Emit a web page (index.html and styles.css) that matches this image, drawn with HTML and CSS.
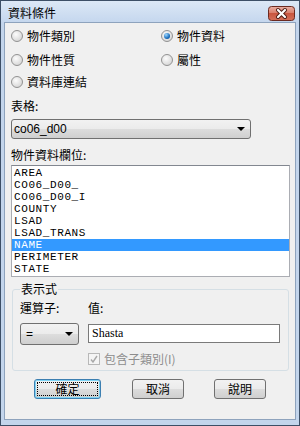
FILE: index.html
```html
<!DOCTYPE html>
<html lang="zh-Hant">
<head>
    <meta charset="UTF-8">
    <meta name="viewport" content="width=device-width, initial-scale=1.0">
    <title>資料條件</title>
    <link rel="stylesheet" href="styles.css">
</head>
<body>
    <div class="window">
        <div class="titlebar">
            <span class="title">資料條件</span>
            <div class="close-btn">
                <svg width="27" height="15" viewBox="0 0 27 15">
                    <defs>
                        <linearGradient id="red" x1="0" y1="0" x2="0" y2="1">
                            <stop offset="0" stop-color="#eab1a5"/>
                            <stop offset="0.5" stop-color="#d87a66"/>
                            <stop offset="0.5" stop-color="#c9563f"/>
                            <stop offset="1" stop-color="#d4705a"/>
                        </linearGradient>
                    </defs>
                    <rect x="0.5" y="0.5" width="26" height="14" rx="3" fill="url(#red)" stroke="#6b2a20"/>
                    <path d="M10 4 L17 11 M17 4 L10 11" stroke="#4a1a12" stroke-width="4" stroke-linecap="round"/>
                    <path d="M10 4 L17 11 M17 4 L10 11" stroke="#fff" stroke-width="2.2" stroke-linecap="round"/>
                </svg>
            </div>
        </div>
        <div class="client">
            <div class="radios">
                <div class="radio-item"><span class="radio"></span>物件類別</div>
                <div class="radio-item"><span class="radio checked"></span>物件資料</div>
                <div class="radio-item"><span class="radio"></span>物件性質</div>
                <div class="radio-item"><span class="radio"></span>屬性</div>
                <div class="radio-item"><span class="radio"></span>資料庫連結</div>
            </div>

            <p class="label first">表格:</p>
            <div class="combo wide">
                <span>co06_d00</span>
                <span class="arrow"></span>
            </div>

            <p class="label second">物件資料欄位:</p>
            <ul class="listbox">
                <li>AREA</li>
                <li>CO06_D00_</li>
                <li>CO06_D00_I</li>
                <li>COUNTY</li>
                <li>LSAD</li>
                <li>LSAD_TRANS</li>
                <li class="selected">NAME</li>
                <li>PERIMETER</li>
                <li>STATE</li>
            </ul>

            <fieldset class="group">
                <legend>表示式</legend>
                <div class="expr">
                    <span>運算子:</span>
                    <span>值:</span>
                    <div class="combo small">
                        <span>=</span>
                        <span class="arrow"></span>
                    </div>
                    <div class="textbox">Shasta</div>
                    <div class="check-row">
                        <span class="checkbox">
                            <svg width="8" height="8" viewBox="0 0 8 8">
                                <path d="M1 4.5 L3 7 L7 1" fill="none" stroke="#a8a8a8" stroke-width="1.4"/>
                            </svg>
                        </span>
                        包含子類別(I)
                    </div>
                </div>
            </fieldset>

            <div class="buttons">
                <div class="btn default">確定</div>
                <div class="btn">取消</div>
                <div class="btn">說明</div>
            </div>
        </div>
    </div>
</body>
</html>
```

FILE: styles.css
```css
body{
    margin: 0;
    font-family: "Noto Sans CJK TC", "Liberation Sans", sans-serif;
    font-size: 12px;
    color: #000;
}

.window{
    width: 300px;
    height: 426px;
    box-sizing: border-box;
    border: 1px solid #3d4f66;
    background-color: #c3d5ec;
    padding: 0 3px 5px 3px;
    display: flex;
    flex-direction: column;
}

.titlebar{
    height: 21px;
    margin: 0 -3px;
    padding: 0 4px 0 7px;
    display: flex;
    align-items: center;
    justify-content: space-between;
    background: linear-gradient(#dce8f6, #c5d7ee);
}
.title{
    line-height: 14px;
    margin-top: 2px;
}
.close-btn{
    height: 15px;
    margin-top: 4px;
}
.close-btn svg{
    display: block;
}

.client{
    flex: 1;
    border: 1px solid #8ea3bd;
    background-color: #f0f0f0;
    padding: 0 0 0 6px;
}

.radios{
    display: grid;
    grid-template-columns: 150px 1fr;
    grid-template-rows: 26px 22px 22px;
    align-items: center;
}
.radio-item{
    display: flex;
    align-items: center;
    gap: 4px;
    line-height: 14px;
}
.radio{
    width: 12px;
    height: 12px;
    box-sizing: border-box;
    border-radius: 50%;
    border: 1px solid #929292;
    background: radial-gradient(circle at 40% 35%, #fcfcfc, #d6d6d6 80%);
    display: flex;
    align-items: center;
    justify-content: center;
}
.radio.checked::after{
    content: "";
    width: 6px;
    height: 6px;
    border-radius: 50%;
    background: radial-gradient(circle at 35% 30%, #9fd8ff, #1b6fbe 60%, #0a3f7a);
}

.label{
    margin: 0;
    line-height: 14px;
}
.label.first{
    margin-top: 6px;
}
.label.second{
    margin-top: 9px;
}

.combo{
    box-sizing: border-box;
    border: 1px solid #707070;
    border-radius: 3px;
    background: linear-gradient(#f2f2f2 0%, #ebebeb 50%, #dddddd 50%, #cfcfcf 100%);
    display: flex;
    align-items: center;
    justify-content: space-between;
    font-family: "Liberation Sans", sans-serif;
}
.combo.wide{
    width: 240px;
    height: 20px;
    margin-top: 6px;
    padding: 0 5px 0 2px;
}
.combo.small{
    height: 22px;
    padding: 0 5px 0 5px;
}
.arrow{
    width: 0;
    height: 0;
    border-left: 4px solid transparent;
    border-right: 4px solid transparent;
    border-top: 4px solid #000;
}

.listbox{
    list-style: none;
    margin: 3px 0 0 0;
    padding: 1px 0;
    width: 279px;
    height: 112px;
    box-sizing: border-box;
    border: 1px solid #abadb3;
    border-top-color: #828790;
    background-color: #fff;
    font-family: "Liberation Mono", monospace;
    font-size: 11px;
    letter-spacing: 0.6px;
    line-height: 12px;
}
.listbox li{
    padding-left: 2px;
    height: 12px;
}
.listbox li.selected{
    background-color: #3399ff;
    color: #fff;
}

.group{
    margin: 5px 0 0 1px;
    width: 277px;
    box-sizing: border-box;
    border: 1px solid #d5dfe5;
    border-radius: 3px;
    padding: 5px 0 3px 7px;
}
.group legend{
    padding: 0 1px;
    line-height: 14px;
}

.expr{
    display: grid;
    grid-template-columns: 59px 192px;
    grid-template-rows: 14px 22px 14px;
    column-gap: 9px;
    row-gap: 8px;
    line-height: 14px;
}
.textbox{
    height: 19px;
    margin-top: 1px;
    box-sizing: border-box;
    border: 1px solid #7a7a7a;
    background-color: #fff;
    padding: 0 3px;
    font-family: "Liberation Serif", serif;
    font-size: 12px;
    line-height: 17px;
}
.check-row{
    grid-column: 2;
    display: flex;
    align-items: center;
    gap: 4px;
    color: #8d8d8d;
    margin-top: -2px;
}
.checkbox{
    width: 12px;
    height: 12px;
    box-sizing: border-box;
    border: 1px solid #b8b8b8;
    background-color: #f4f4f4;
    display: flex;
    align-items: center;
    justify-content: center;
}
.checkbox svg{
    display: block;
}

.buttons{
    display: flex;
    gap: 31px;
    padding-left: 23px;
    margin-top: 8px;
}
.btn{
    width: 52px;
    height: 20px;
    box-sizing: border-box;
    border: 1px solid #707070;
    border-radius: 3px;
    background: linear-gradient(#f2f2f2 0%, #ebebeb 50%, #dddddd 50%, #cfcfcf 100%);
    display: flex;
    align-items: center;
    justify-content: center;
    line-height: 14px;
}
.btn.default{
    width: 67px;
    border-color: #3c7fb1;
    box-shadow: inset 0 0 0 1px #7fd4f5;
    outline: 1px dotted #000;
    outline-offset: -4px;
}
.btn + .btn + .btn{
    margin-left: -1px;
}
```
